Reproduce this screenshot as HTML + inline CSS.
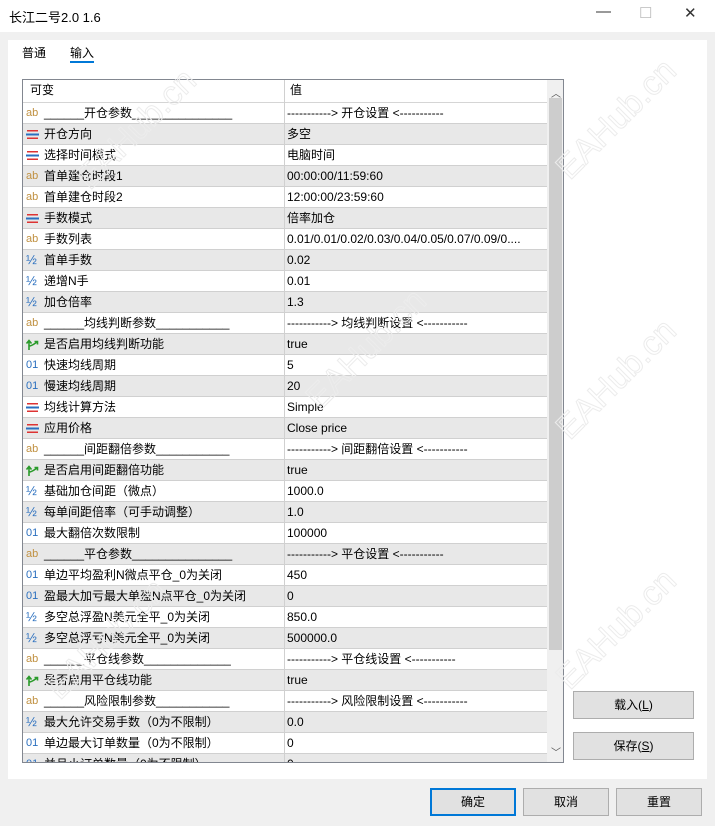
<!DOCTYPE html>
<html><head><meta charset="utf-8"><style>
*{margin:0;padding:0;box-sizing:border-box}
body{width:715px;height:826px;background:#f0f0f0;font-family:"Liberation Sans","Noto Sans CJK SC",sans-serif;font-size:12px;color:#000;position:relative;overflow:hidden}
.title{position:absolute;left:0;top:0;width:715px;height:32px;background:#fff;}
.title .t{position:absolute;left:9px;top:7px;font-size:13px}
.title .c{position:absolute;top:4px;font-size:15px;color:#333}
.panel{position:absolute;left:8px;top:40px;width:699px;height:739px;background:#fff}
.tab{position:absolute;top:44px;font-size:12px}
.grid{position:absolute;left:22px;top:79px;width:542px;height:684px;border:1px solid #828790;background:#fff;overflow:hidden}
.hdr{position:absolute;left:0;top:0;width:524px;height:23px;border-bottom:1px solid #d5d5d5;line-height:21px}
.hdr span{position:absolute;top:0}
.row{position:absolute;left:0;width:524px;height:21px;border-bottom:1px solid #d0d0d0;line-height:20px}
.row.g{background:#e8e8e8}
.row .n{position:absolute;left:21px;top:0;white-space:nowrap}
.row .v{position:absolute;left:264px;top:0;white-space:nowrap}
.row .i{position:absolute;left:3px;top:0;height:20px;width:16px;font-size:11px;display:flex;align-items:center}
.vl{position:absolute;left:261px;top:0;width:1px;height:684px;background:#d0d0d0}
.sb{position:absolute;left:524px;top:0;width:17px;height:682px;background:#f0f0f0}
.th{position:absolute;left:526px;top:18px;width:13px;height:552px;background:#cdcdcd}
.ab{color:#c09040}.b{color:#2a6fbf}
.btn{position:absolute;height:28px;border:1px solid #adadad;background:#e1e1e1;text-align:center;line-height:26px;font-size:12px}
.wm{position:absolute;color:transparent;-webkit-text-stroke:1px #ececec;font-size:34px;transform:rotate(-45deg);font-family:"Liberation Sans",sans-serif}
</style></head><body>
<div class="title"><span class="t">长江二号2.0 1.6</span>
<span class="c" style="left:596px;top:3px">—</span><span class="c" style="left:639px;color:#bbb">☐</span><span class="c" style="left:684px">✕</span></div>
<div class="panel"></div>
<div class="tab" style="left:22px">普通</div>
<div class="tab" style="left:70px">输入</div>
<div style="position:absolute;left:70px;top:61px;width:24px;height:2px;background:#0078d7"></div>
<div class="grid">
<div class="hdr"><span style="left:7px">可变</span><span style="left:267px">值</span></div>
<div id="rows"></div>
<div class="vl"></div>
<div class="sb"></div>
<div style="position:absolute;left:528px;top:5px;font-size:10px;color:#555">︿</div>
<div class="th"></div>
<div style="position:absolute;left:528px;top:664px;font-size:10px;color:#555">﹀</div>
</div>
<div class="wm" style="left:60px;top:110px">EAHub.cn</div>
<div class="wm" style="left:290px;top:330px">EAHub.cn</div>
<div class="wm" style="left:540px;top:100px">EAHub.cn</div>
<div class="wm" style="left:540px;top:360px">EAHub.cn</div>
<div class="wm" style="left:30px;top:620px">EAHub.cn</div>
<div class="wm" style="left:540px;top:610px">EAHub.cn</div>
<div class="btn" style="left:573px;top:691px;width:121px">载入(<u>L</u>)</div>
<div class="btn" style="left:573px;top:732px;width:121px">保存(<u>S</u>)</div>
<div class="btn" style="left:430px;top:788px;width:86px;border:2px solid #0078d7;line-height:24px">确定</div>
<div class="btn" style="left:523px;top:788px;width:86px">取消</div>
<div class="btn" style="left:616px;top:788px;width:86px">重置</div>
<script>
var E='<svg width="13" height="11" viewBox="0 0 13 11"><rect x="1" y="1" width="11" height="1.5" fill="#d33"/><rect x="0" y="4.5" width="13" height="2" fill="#2a6fbf"/><rect x="1" y="8.5" width="11" height="1.5" fill="#d33"/></svg>';
var B='<svg width="14" height="13" viewBox="0 0 14 13"><path d="M3 12V3M0.5 5.5L3 2.5L5.5 5.5M3 8C6 8 8 6 11 4M8.5 3.5H11.5V6.5" stroke="#2a9a2a" stroke-width="1.6" fill="none"/></svg>';
var I={a:'<span class="ab">ab</span>',e:E,h:'<span class="b" style="font-size:13px">½</span>',o:'<span class="b">01</span>',b:B};
var R=[
['a','______开仓参数_______________','-----------> 开仓设置 <-----------'],
['e','开仓方向','多空'],['e','选择时间模式','电脑时间'],
['a','首单建仓时段1','00:00:00/11:59:60'],['a','首单建仓时段2','12:00:00/23:59:60'],
['e','手数模式','倍率加仓'],['a','手数列表','0.01/0.01/0.02/0.03/0.04/0.05/0.07/0.09/0....'],
['h','首单手数','0.02'],['h','递增N手','0.01'],['h','加仓倍率','1.3'],
['a','______均线判断参数___________','-----------> 均线判断设置 <-----------'],
['b','是否启用均线判断功能','true'],['o','快速均线周期','5'],['o','慢速均线周期','20'],
['e','均线计算方法','Simple'],['e','应用价格','Close price'],
['a','______间距翻倍参数___________','-----------> 间距翻倍设置 <-----------'],
['b','是否启用间距翻倍功能','true'],['h','基础加仓间距（微点）','1000.0'],['h','每单间距倍率（可手动调整）','1.0'],['o','最大翻倍次数限制','100000'],
['a','______平仓参数_______________','-----------> 平仓设置 <-----------'],
['o','单边平均盈利N微点平仓_0为关闭','450'],['o','盈最大加亏最大单盈N点平仓_0为关闭','0'],
['h','多空总浮盈N美元全平_0为关闭','850.0'],['h','多空总浮亏N美元全平_0为关闭','500000.0'],
['a','______平仓线参数_____________','-----------> 平仓线设置 <-----------'],
['b','是否启用平仓线功能','true'],
['a','______风险限制参数___________','-----------> 风险限制设置 <-----------'],
['h','最大允许交易手数（0为不限制）','0.0'],['o','单边最大订单数量（0为不限制）','0'],['o','并且小订单数量（0为不限制）','0']];
var h='';R.forEach(function(r,k){h+='<div class="row'+(k%2?' g':'')+'" style="top:'+(23+21*k)+'px"><span class="i">'+I[r[0]]+'</span><span class="n">'+r[1]+'</span><span class="v">'+r[2]+'</span></div>'});
document.getElementById('rows').innerHTML=h;
</script>
</body></html>
